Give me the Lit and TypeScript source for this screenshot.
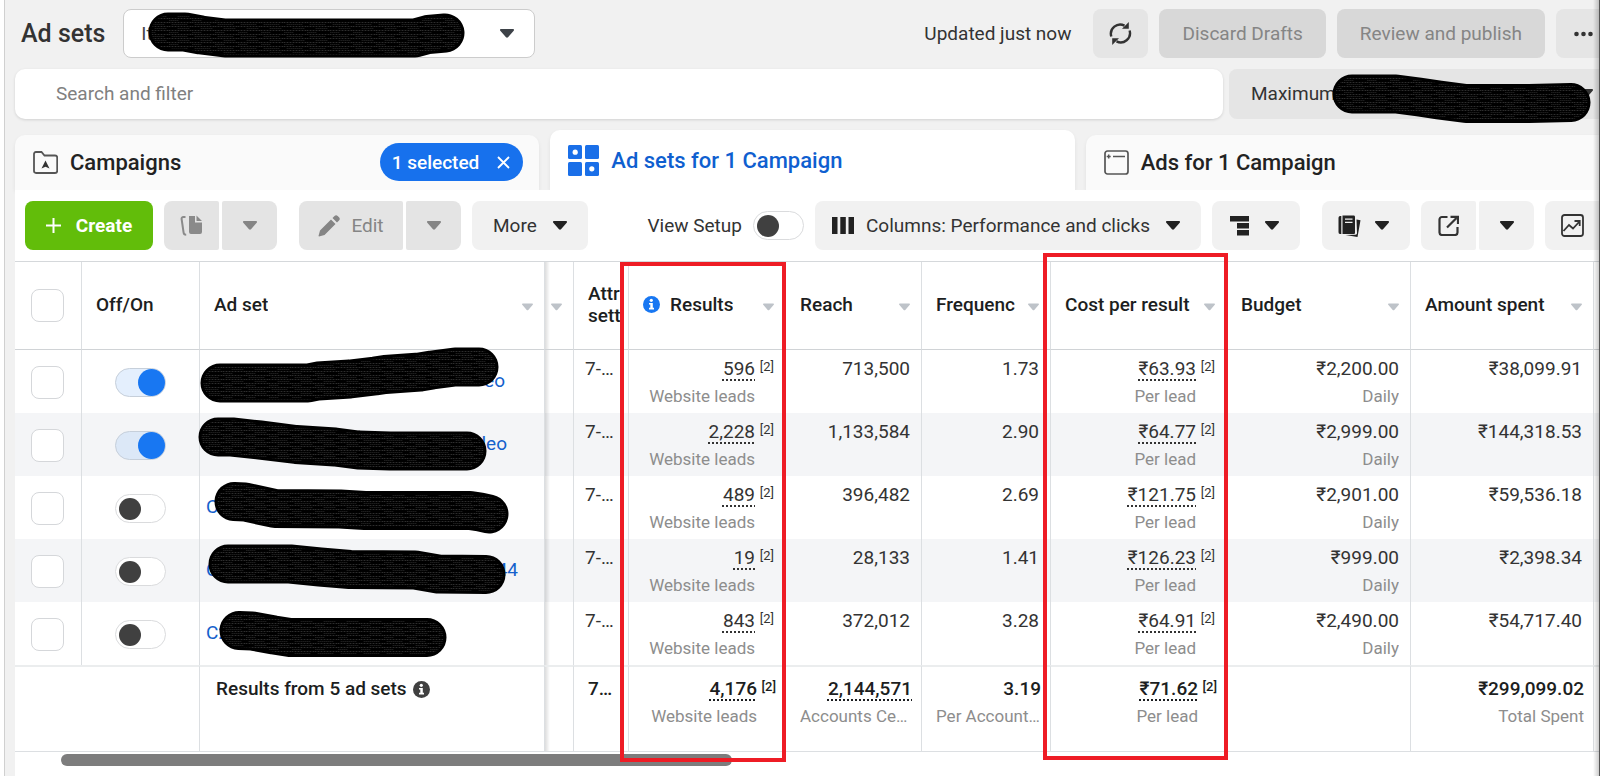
import { LitElement, html, svg, css, nothing } from "lit";
import { customElement, property, state } from "lit/decorators.js";
import { classMap } from "lit/directives/class-map.js";

const caret = (cls = "caret") => html`<svg class=${cls} viewBox="0 0 14 9" aria-hidden="true">
  <path d="M1 0h12c.9 0 1.3 1 .7 1.7L8 8.3c-.5.6-1.500.6-2 0L.3 1.700C-.3 1 .1 0 1 0z" fill="currentColor" />
</svg>`;

const infoDot = html`<svg class="info" viewBox="0 0 17 17" aria-hidden="true">
  <circle cx="8.500" cy="8.500" r="8.500" fill="currentColor" />
  <circle cx="8.300" cy="4.300" r="1.600" fill="#fff" />
  <path d="M6 7h3.800v4.800H11v1.700H6v-1.700h1.300V8.600H6z" fill="#fff" />
</svg>`;

const icons = {
  refresh: svg`<g fill="none" stroke="#333" stroke-width="2.400">
    <path d="M2.300 14.500A9.300 9.300 0 0 1 15.500 3.600" /><path d="M20.600 8.500A9.300 9.300 0 0 1 7.500 19.400" /></g>
    <path d="M13 6.800h6.800V0l-2.200 2.200z M10 16.200H3.200V23l2.200-2.200z" fill="#333" />`,
  dots: svg`<g fill="#333"><circle cx="2.500" cy="11" r="2.300"/><circle cx="9.500" cy="11" r="2.300"/><circle cx="16.500" cy="11" r="2.300"/></g>`,
  plus: svg`<path d="M7.500 0v15M0 7.500h15" stroke="#fff" stroke-width="2" />`,
  copy: svg`<path d="M9 2h6v6.500h7V18a2 2 0 0 1-2 2H11a2 2 0 0 1-2-2z M16.500 1.500 22 7h-5.500z" fill="#8a8a8a"/>
    <path d="M5.500 3H3.400c-1.300 0-2 .8-1.800 2l2 13.500c.1 1.200 1 2.300 2.600 2.300" fill="none" stroke="#8a8a8a" stroke-width="2"/>`,
  pencil: svg`<path d="M13 4.500 17.500 9 6.500 20 1 21.500 .5 21 2 15.500z M14.500 3 16.500 1a2.300 2.300 0 0 1 3.200 0l1.300 1.300a2.300 2.300 0 0 1 0 3.200l-2 2z" fill="#858585"/>`,
  columns: svg`<path d="M0 1h5.500v17H0zM8.300 1h5.500v17H8.300zM16.500 1H22v17h-5.500z" fill="#222"/>`,
  breakdown: svg`<path d="M0 1h19v5.500H0zM7 8h12v5.500H7zM7 15h12v5.500H7z" fill="#222"/>`,
  reports: svg`<path d="M2 1h1.300v18H2C1 19 .5 18 .5 17V3C.500 2 1 1 2 1z" fill="#222"/>
    <path d="M4.500.500h11c1 0 1.500.6 1.500 1.500v15.500c0 1-.5 1.500-1.500 1.500h-11z" fill="#222"/>
    <path d="M7 4.200h7.500M7 7.300h7.500" stroke="#f1f1f1" stroke-width="1.300"/>
    <path d="M18.500 4.500 22.500 5.200 19.500 22l-12-2 10-.3c1 0 1.500-.8 1.500-1.700z" fill="#222"/>`,
  exporting: svg`<path d="M9.500 2H4a2.500 2.500 0 0 0-2.500 2.500v13A2.500 2.500 0 0 0 4 20h13a2.500 2.500 0 0 0 2.500-2.500V12" fill="none" stroke="#333" stroke-width="2.200"/>
    <path d="M9 12.500 18.500 3M12.500 1.800h7.500V9" fill="none" stroke="#333" stroke-width="2.200"/>`,
  chart: svg`<rect x="1" y="1" width="21" height="21" rx="2.500" fill="none" stroke="#333" stroke-width="1.800"/>
    <path d="M2.500 17 8 11l4 3.500L18.500 7.500M13.500 7h5.200v5" fill="none" stroke="#333" stroke-width="1.800"/>`,
  folder: svg`<path d="M1 20V3c0-1 .7-2 2-2h5.500l3 3.500H22c1.300 0 2.200.8 2.200 2V20c0 1.300-.9 2-2.200 2H3c-1.300 0-2-.7-2-2z" fill="none" stroke="#555" stroke-width="1.800"/>
    <path d="M12.500 9.500 16.500 17.500l-4-1.800-4 1.800z" fill="#333"/>`,
  tiles: svg`<g fill="#1a6fe8"><rect x="0" y="0" width="14" height="14" rx="1.500"/><rect x="17" y="0" width="14" height="14" rx="1.500"/>
    <rect x="0" y="17" width="14" height="14" rx="1.500"/><rect x="17" y="17" width="14" height="14" rx="1.500"/></g>
    <circle cx="7.200" cy="7.200" r="2.600" fill="#fff"/><circle cx="23.800" cy="23.800" r="2.600" fill="#fff"/>`,
  ad: svg`<rect x="1" y="1" width="23" height="23" rx="2.500" fill="none" stroke="#555" stroke-width="1.700"/>
    <path d="M4.700 4.500v4M2.700 6.500h4M9 6.500h12" stroke="#555" stroke-width="1.500"/>`,
  close: svg`<path d="M1 1l11 11M12 1 1 12" stroke="#fff" stroke-width="1.800"/>`,
};

const icon = (name: keyof typeof icons, w: number, h: number) =>
  html`<svg width=${w} height=${h} viewBox="0 0 ${w} ${h}" aria-hidden="true">${icons[name]}</svg>`;

/** A thick marker stroke that covers a private name. */
@customElement("marker-stroke")
export class MarkerStroke extends LitElement {
  @property() path = "";

  static styles = css`
    :host { position: absolute; left: 0; top: 0; z-index: 3; pointer-events: none; }
    svg { display: block; width: 1px; height: 1px; overflow: visible; }
    path { fill: none; stroke-linecap: round; stroke-linejoin: round; }
    .ink { stroke: #000; stroke-width: 39px; }
    .grain { stroke: url(#grain); stroke-width: 33px; }
  `;

  render() {
    return html`<svg aria-hidden="true">
      <defs>
        <pattern id="grain" width="23" height="12" patternUnits="userSpaceOnUse">
          <path d="M0 1.500h23M0 5.500h23M0 9.500h23" stroke="#2e2e2e" stroke-width="1" stroke-dasharray="1 2" />
          <path d="M3 3.500h15M9 7.500h12M0 11.500h9" stroke="#1c1c1c" stroke-width="1" stroke-dasharray="1 1" />
        </pattern>
      </defs>
      <path class="ink" d=${this.path} />
      <path class="grain" d=${this.path} />
    </svg>`;
  }
}

interface AdSet {
  on: boolean;
  head: string;
  tail: string;
  width: number;
  mark: string;
  results: string;
  reach: string;
  frequency: string;
  cost: string;
  budget: string;
  spent: string;
}

const adSets: AdSet[] = [
  { on: true, head: "", tail: "eo", width: 299, mark: "M20 33H108L118 31 150 29 175 26 185 24.500 220 22 232 20 255 17H279", results: "596", reach: "713,500", frequency: "1.73", cost: "₹63.93", budget: "₹2,200.00", spent: "₹38,099.91" },
  { on: true, head: "", tail: "leo", width: 301, mark: "M18 24H32L60 27 96 31.500 135 34 158 37 190 38H267", results: "2,228", reach: "1,133,584", frequency: "2.90", cost: "₹64.77", budget: "₹2,999.00", spent: "₹144,318.53" },
  { on: false, head: "C", tail: "", width: 299, mark: "M34 25.500L45 26 75 32.500 140 33 165 34.500 270 34.500 280 36 289 38", results: "489", reach: "396,482", frequency: "2.69", cost: "₹121.75", budget: "₹2,901.00", spent: "₹59,536.18" },
  { on: false, head: "C", tail: "44", width: 312, mark: "M28 25H90L120 28 150 30.500 215 31 238 35 286 35.500", results: "19", reach: "28,133", frequency: "1.41", cost: "₹126.23", budget: "₹999.00", spent: "₹2,398.34" },
  { on: false, head: "C2", tail: "", width: 240, mark: "M39 28.500L52 29 74 33 90 35.500 227 35.500", results: "843", reach: "372,012", frequency: "3.28", cost: "₹64.91", budget: "₹2,490.00", spent: "₹54,717.40" },
];

@customElement("top-bar")
export class TopBar extends LitElement {
  static styles = css`
    :host { display: block; padding: 9px 0 0 10px; }
    .row { display: flex; align-items: center; gap: 11px; height: 49px; }
    h1 { margin: 0 7px 0 6px; font-size: 25px; font-weight: 500; color: #333; white-space: nowrap; }
    .account { position: relative; flex: 0 1 412px; height: 49px; }
    select { appearance: none; width: 100%; height: 100%; box-sizing: border-box; padding: 0 17px; font: inherit; color: #444;
      background: #fff; border: 1px solid #ccc; border-radius: 8px; }
    .account .caret { position: absolute; right: 21px; top: 20px; color: #3d4248; }
    .caret { width: 14px; height: 9px; flex: none; }
    .updated { margin-left: auto; margin-right: 11px; color: #333; white-space: nowrap; }
    button { height: 49px; border: 0; border-radius: 8px; background: #e5e5e5; font: inherit; color: #333; white-space: nowrap;
      display: flex; align-items: center; justify-content: center; padding: 0 23px; }
    button.refresh { width: 55px; padding: 0; }
    button:disabled { background: #d8d8d8; color: #858585; }
    button.more { width: 44px; padding: 0 0 0 10px; border-radius: 8px 0 0 8px; }
    .filters { display: flex; gap: 6px; margin-top: 11px; }
    input { flex: 1; min-width: 0; height: 50px; box-sizing: border-box; padding: 0 41px 2px; border: 0; border-radius: 10px;
      background: #fff; font: inherit; color: #333; box-shadow: 0 1px 3px #0002; }
    input::placeholder { color: #808080; opacity: 1; }
    .range { position: relative; }
    .range button { width: 371px; height: 50px; justify-content: space-between; padding: 0 7px 2px 22px; border-radius: 8px 0 0 8px; }
  `;

  render() {
    return html`
      <div class="row">
        <h1>Ad sets</h1>
        <div class="account">
          <select aria-label="Ad account"><option>It</option></select>
          ${caret()}
          <marker-stroke path="M45 23L62 23 78 26 102 29 292 29 305 25.500 322 24"></marker-stroke>
        </div>
        <span class="updated">Updated just now</span>
        <button class="refresh" aria-label="Refresh">${icon("refresh", 23, 23)}</button>
        <button disabled>Discard Drafts</button>
        <button disabled>Review and publish</button>
        <button class="more" aria-label="More options">${icon("dots", 19, 22)}</button>
      </div>
      <div class="filters">
        <input type="search" aria-label="Search and filter" placeholder="Search and filter" />
        <div class="range">
          <button>Maximum ${caret()}</button>
          <marker-stroke path="M123 25L167 25 190 28 210 31 237 34.500 300 34.500 342 33.500"></marker-stroke>
        </div>
      </div>
    `;
  }
}

@customElement("level-tabs")
export class LevelTabs extends LitElement {
  static styles = css`
    :host { display: block; }
    nav { display: grid; grid-template-columns: repeat(3, minmax(0, 1fr)); gap: 11px; align-items: end; margin: 11px -10px 0 0; }
    a { display: flex; align-items: center; gap: 12px; height: 55px; box-sizing: border-box; padding: 0 16px 0 18px; border-radius: 10px 10px 0 0;
      background: #fafafa; color: #222; font-size: 22px; font-weight: 500; text-decoration: none; white-space: nowrap; box-shadow: 0 2px 4px #0001; }
    a.active { height: 60px; background: #fff; color: #0f5fd0; }
    .tab { position: relative; min-width: 0; }
    button { position: absolute; right: 16px; top: 8px; display: flex; align-items: center; gap: 18px; height: 38px; padding: 0 13px 0 12px; border: 0;
      border-radius: 19px; background: #1771ed; color: #fff; font: 500 19px Roboto, sans-serif; }
  `;

  render() {
    return html`<nav>
      <div class="tab">
        <a href="#campaigns">${icon("folder", 25, 23)}Campaigns</a>
        <button aria-label="1 selected, clear">1 selected ${icon("close", 13, 13)}</button>
      </div>
      <div class="tab"><a class="active" href="#adsets">${icon("tiles", 31, 31)}Ad sets for 1 Campaign</a></div>
      <div class="tab"><a href="#ads">${icon("ad", 25, 25)}Ads for 1 Campaign</a></div>
    </nav>`;
  }
}

const switchStyles = css`
  .switch { appearance: none; position: relative; display: block; flex: none; box-sizing: border-box; width: 51px; height: 29px; margin: 0;
    border: 1px solid #dadbdd; border-radius: 15px; background: #fff; }
  .switch::before { content: ""; display: block; width: 22px; height: 22px; margin: 3px; border-radius: 50%; background: #404040; }
  .switch:checked { background: #e4effd; border-color: #c6cfda; }
  .switch:checked::before { width: 27px; height: 27px; margin: 0 0 0 auto; background: #1877f2; }
`;

@customElement("tool-bar")
export class ToolBar extends LitElement {
  static styles = [switchStyles, css`
    :host { display: block; position: relative; background: #fff; }
    .bar { display: flex; align-items: center; gap: 11px; padding: 11px 0 11px 10px; }
    button { display: flex; align-items: center; justify-content: center; height: 49px; padding: 0; border: 0; border-radius: 8px;
      background: #f1f1f1; color: #222; font: inherit; white-space: nowrap; }
    button:disabled { background: #e4e4e4; color: #858585; }
    .caret { width: 14px; height: 9px; flex: none; }
    .create { width: 128px; gap: 15px; background: #62bd0a; color: #fff; font-weight: 700; }
    .pair { display: flex; gap: 3px; }
    .pair button { width: 55px; }
    .pair button.wide { width: 104px; gap: 11px; }
    .pair button:first-child { border-radius: 8px 2px 2px 8px; }
    .pair button:last-child { border-radius: 2px 8px 8px 2px; }
    .apart { margin-left: 11px; }
    .menu { padding: 0 21px; gap: 16px; color: #333; }
    .menu.columns { padding-left: 17px; }
    .menu.columns svg:first-child { margin-right: -4px; }
    .menu.breakdown { padding-left: 18px; }
    .menu.reports { padding-left: 16px; gap: 14px; }
    .menu .caret { color: #222; }
    .setup { display: flex; align-items: center; gap: 11px; margin-left: auto; color: #333; white-space: nowrap; }
    .last { width: 55px; border-radius: 8px 0 0 8px; }
  `];

  render() {
    return html`<div class="bar">
      <button class="create">${icon("plus", 15, 15)}Create</button>
      <div class="pair">
        <button disabled aria-label="Duplicate">${icon("copy", 23, 23)}</button>
        <button disabled aria-label="Duplicate options">${caret()}</button>
      </div>
      <div class="pair apart">
        <button class="wide" disabled>${icon("pencil", 22, 22)}Edit</button>
        <button disabled aria-label="Edit options">${caret()}</button>
      </div>
      <button class="menu">More ${caret()}</button>
      <label class="setup">View Setup <input class="switch" type="checkbox" role="switch" /></label>
      <button class="menu columns">${icon("columns", 22, 19)}Columns: Performance and clicks ${caret()}</button>
      <button class="menu breakdown" aria-label="Breakdown">${icon("breakdown", 19, 21)}${caret()}</button>
      <button class="menu reports apart" aria-label="Reports">${icon("reports", 23, 22)}${caret()}</button>
      <div class="pair">
        <button aria-label="Export">${icon("exporting", 21, 21)}</button>
        <button aria-label="Export options">${caret()}</button>
      </div>
      <button class="last" aria-label="Charts">${icon("chart", 23, 23)}</button>
    </div>`;
  }
}

@customElement("ad-set-table")
export class AdSetTable extends LitElement {
  @state() private rows = adSets;

  static styles = [switchStyles, css`
    :host { display: block; position: relative; }
    table { width: 100%; table-layout: fixed; border-collapse: separate; border-spacing: 0; border-top: 1px solid #d5d8db; }
    .c-check { width: 67px; } .c-switch { width: 118px; } .c-stub { width: 29px; } .c-attr { width: 55px; } .c-results { width: 157px; }
    .c-reach { width: 136px; } .c-freq { width: 129px; } .c-cost { width: 176px; } .c-budget { width: 184px; } .c-spent { width: 183px; } .c-end { width: 6px; }
    th, td { position: relative; box-sizing: border-box; padding: 0; text-align: left; font-weight: 400; border-right: 1px solid #dcdfe2;
      vertical-align: top; white-space: nowrap; }
    th:last-child, td:last-child { border-right: 0; }
    thead th { height: 88px; border-bottom: 1px solid #d0d3d6; vertical-align: middle; }
    .head { display: flex; align-items: center; justify-content: space-between; padding: 0 11px 2px 14px; font-weight: 500; color: #1c1e21; line-height: 22px; }
    .head.narrow { padding: 0 11px 2px 6px; }
    .sort { width: 11px; height: 8px; flex: none; color: #bec3c9; margin-top: 4px; }
    .name { display: flex; align-items: center; gap: 10px; overflow: hidden; }
    .info { width: 17px; height: 17px; flex: none; color: #404040; }
    .name .info { color: #1877f2; }
    .tick { appearance: none; display: block; box-sizing: border-box; width: 33px; height: 33px; margin: 0 0 0 16px; border: 1px solid #d5d7da;
      border-radius: 8px; background: #fff; }
    tbody td { height: 63px; }
    tbody tr.shade td { background: #f4f5f7; }
    tbody tr.shade .switch:checked { background: #dce8f7; }
    tbody .mid { vertical-align: middle; padding-top: 2px; }
    .switch { margin: 0 auto; }
    .link { display: flex; justify-content: space-between; margin: 17px 0 0 6px; line-height: 28px; color: #1461cc; text-decoration: none; }
    .stub::before { content: ""; position: absolute; left: 0; top: 0; bottom: 0; width: 5px; background: linear-gradient(90deg, #0002, #0000); }
    .cell { padding: 5px 11px 0 14px; text-align: right; line-height: 28px; color: #333; }
    .cell.attr { padding: 5px 14px 0 11px; text-align: left; }
    .sub { color: #8d8d8d; font-size: 17px; line-height: 26px; overflow: hidden; text-overflow: ellipsis; }
    .noted .sub { padding-right: 19px; }
    .dotted { text-decoration: underline dotted 2px; text-underline-offset: 4px; }
    .ref { display: inline-block; width: 19px; font-size: 13px; vertical-align: 4px; line-height: 14px; }
    tfoot td { height: 87px; border-top: 2px solid #ebedee; border-bottom: 1px solid #dcdfe2; }
    tfoot .cell { padding: 8px 9px 0 14px; color: #1c1e21; }
    tfoot .cell.attr { padding: 8px 12px 0 14px; }
    tfoot .wide .sub { text-align: left; margin-right: -4px; }
    tfoot .value { font-weight: 500; }
    tfoot .cell.total { display: flex; align-items: center; gap: 6px; padding-left: 16px; font-weight: 500; }
    .focus { position: absolute; z-index: 5; left: -9px; right: -1px; top: 0; height: 500px; box-sizing: border-box; border: 4px solid #ee1c25; pointer-events: none; }
    .focus.tall { left: -8px; top: -9px; height: 507px; right: -2px; }
    .scroll { height: 23px; padding: 2px 14px 0 46px; box-sizing: border-box; }
    .thumb { width: 44%; height: 12px; border-radius: 6px; background: #7d7d7d; }
  `];

  private head(label: unknown, extra: unknown = nothing) {
    return html`<th scope="col"><div class="head"><span class="name">${label}</span>${caret("sort")}</div>${extra}</th>`;
  }

  private cell(value: string, sub = "", noted = false, dotted = noted) {
    const wide = sub.endsWith("…");
    return html`<td><div class=${classMap({ cell: true, noted, wide })}>
      <div class="value"><span class=${classMap({ dotted })}>${value}</span>${noted ? html`<span class="ref">[2]</span>` : nothing}</div>
      ${sub ? html`<div class="sub">${sub}</div>` : nothing}
    </div></td>`;
  }

  render() {
    return html`
      <table>
        <colgroup>
          <col class="c-check" /><col class="c-switch" /><col /><col class="c-stub" /><col class="c-attr" /><col class="c-results" />
          <col class="c-reach" /><col class="c-freq" /><col class="c-cost" /><col class="c-budget" /><col class="c-spent" /><col class="c-end" />
        </colgroup>
        <thead>
          <tr>
            <th><input class="tick" type="checkbox" aria-label="Select all ad sets" /></th>
            <th scope="col"><div class="head">Off/On</div></th>
            ${this.head("Ad set")}
            <th class="stub"><div class="head narrow">${caret("sort")}</div></th>
            <th scope="col"><div class="head">Attr<br />sett</div></th>
            ${this.head(html`${infoDot}Results`, html`<div class="focus"></div>`)}
            ${this.head("Reach")} ${this.head("Frequenc")}
            ${this.head("Cost per result", html`<div class="focus tall"></div>`)}
            ${this.head("Budget")} ${this.head("Amount spent")}
            <th></th>
          </tr>
        </thead>
        <tbody>
          ${this.rows.map((r, i) => html`<tr class=${classMap({ shade: i % 2 === 1 })}>
            <td class="mid"><input class="tick" type="checkbox" aria-label="Select ad set ${i + 1}" /></td>
            <td class="mid"><input class="switch" type="checkbox" role="switch" aria-label="Ad set ${i + 1} on" .checked=${r.on} /></td>
            <td>
              <a class="link" href="#adset" style="width:${r.width}px"><span>${r.head}</span><span>${r.tail}</span></a>
              <marker-stroke path=${r.mark}></marker-stroke>
            </td>
            <td class="stub"></td>
            <td><div class="cell attr">7-…</div></td>
            ${this.cell(r.results, "Website leads", true)}
            ${this.cell(r.reach)} ${this.cell(r.frequency)}
            ${this.cell(r.cost, "Per lead", true)}
            ${this.cell(r.budget, "Daily")} ${this.cell(r.spent)}
            <td></td>
          </tr>`)}
        </tbody>
        <tfoot>
          <tr>
            <td colspan="2"></td>
            <td><div class="cell total">Results from 5 ad sets ${infoDot}</div></td>
            <td class="stub"></td>
            <td><div class="cell attr"><div class="value">7…</div></div></td>
            ${this.cell("4,176", "Website leads", true)}
            ${this.cell("2,144,571", "Accounts Ce…", false, true)}
            ${this.cell("3.19", "Per Account…")}
            ${this.cell("₹71.62", "Per lead", true)}
            <td></td>
            ${this.cell("₹299,099.02", "Total Spent")}
            <td></td>
          </tr>
        </tfoot>
      </table>
      <div class="scroll"><div class="thumb"></div></div>
    `;
  }
}

@customElement("app-root")
export class AppRoot extends LitElement {
  static styles = css`
    :host { display: block; position: relative; min-height: 100vh; overflow: hidden; box-sizing: border-box; padding-left: 4px;
      background: #fff; font: 19px Roboto, sans-serif; }
    .shell { min-height: 100vh; box-sizing: border-box; padding-left: 10px; border-left: 1px solid #d0d0d0; background: #f1f1f1; }
    top-bar { margin-left: -10px; padding-left: 10px; }
    .card { min-height: calc(100vh - 190px); background: #fff; }
    .edge { position: absolute; z-index: 6; right: 0; top: 0; bottom: 0; width: 7px; box-sizing: border-box; border-right: 1px solid #555;
      background: linear-gradient(90deg, #0000, #0003); pointer-events: none; }
  `;

  render() {
    return html`
      <div class="shell">
        <top-bar></top-bar>
        <level-tabs></level-tabs>
        <main class="card">
          <tool-bar></tool-bar>
          <ad-set-table></ad-set-table>
        </main>
      </div>
      <div class="edge"></div>
    `;
  }
}
